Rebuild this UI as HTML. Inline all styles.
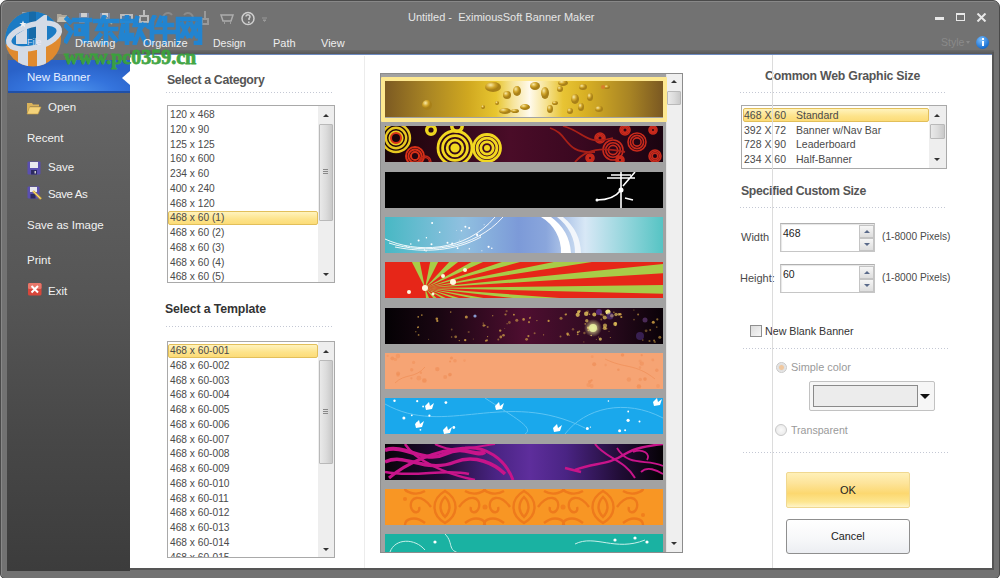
<!DOCTYPE html>
<html><head><meta charset="utf-8">
<style>
*{margin:0;padding:0;box-sizing:border-box}
html,body{width:1000px;height:578px;overflow:hidden;background:#fff}
body{font-family:"Liberation Sans",sans-serif;font-size:11px;color:#333;position:relative}
.a{position:absolute}
#win{left:0;top:0;width:1000px;height:579px;background:#727272;border:1px solid #4a4a4a;border-radius:7px 7px 5px 5px;box-shadow:inset 1px 1px 0 #888}
.t{position:absolute;white-space:nowrap;line-height:1}
#side{left:7px;top:54px;width:123px;height:517px;background:linear-gradient(#6a6a6a,#5e5e5e 25%,#555 48%,#474747 75%,#3c3c3c)}
#content{left:130px;top:54px;width:862px;height:514px;background:#fff;border-top:1px solid #6d8ac0}
#cframe{left:130px;top:52px;width:864px;height:518px;border:2px solid #555;border-left:none;border-top:none}
.st{color:#f2f2f2;font-size:11.5px}
.tab{color:#eee;font-size:11px;top:38px;z-index:5}
.dot{position:absolute;height:1px;background-image:linear-gradient(90deg,#c4c8d4 1px,transparent 1px);background-size:3px 1px}
.h{font-weight:bold;color:#555;font-size:12.3px;letter-spacing:-0.3px}
.lb{position:absolute;background:#fff;border:1px solid #a9a9a9}
.li{position:absolute;font-size:10.2px;color:#4a4a4a;white-space:nowrap;line-height:1}
.sel{position:absolute;border:1px solid #e2bf5a;border-radius:2px;background:linear-gradient(#fff3bd,#fde38a 60%,#fcdc78)}
.sb{position:absolute;background:#eeeeee}
.thumb{position:absolute;background:linear-gradient(90deg,#e9e9e9,#dcdcdc 50%,#c9c9c9);border:1px solid #b9b9b9;border-radius:1px}
.up{position:absolute;width:0;height:0;border-left:3px solid transparent;border-right:3px solid transparent;border-bottom:3px solid #333}
.dn{position:absolute;width:0;height:0;border-left:3px solid transparent;border-right:3px solid transparent;border-top:3px solid #333}
.lt{color:#4a4a4a;font-size:10.7px}
.bn{position:absolute;left:385px;width:278px;height:36px;overflow:hidden}
</style></head><body>
<div id="win" class="a"></div>
<!-- title -->
<div class="t" style="left:408px;top:12px;color:#e6e6e6;font-size:11px">Untitled -&nbsp; EximiousSoft Banner Maker</div>
<div class="t tab" style="left:75px">Drawing</div>
<div class="t tab" style="left:143px">Organize</div>
<div class="t tab" style="left:213px;font-size:10.5px">Design</div>
<div class="t tab" style="left:273px">Path</div>
<div class="t tab" style="left:321px">View</div>
<!-- window controls -->
<div class="a" style="left:935px;top:17px;width:9px;height:3px;background:#e8e8e8"></div>
<div class="a" style="left:956px;top:13px;width:9px;height:8px;border:1px solid #e8e8e8;border-top-width:2px"></div>
<svg class="a" style="left:976px;top:13px" width="11" height="9"><path d="M1.5 0.5 L9.5 8.5 M9.5 0.5 L1.5 8.5" stroke="#e8e8e8" stroke-width="2"/></svg>
<div class="t" style="left:941px;top:37px;color:#8a8a8a;font-size:10.5px">Style</div>
<div class="a" style="left:966px;top:41px;width:0;height:0;border-left:2.5px solid transparent;border-right:2.5px solid transparent;border-top:3px solid #8a8a8a"></div>
<div class="a" style="left:976px;top:36px;width:13px;height:13px;border-radius:50%;background:radial-gradient(circle at 40% 30%,#7cc0ff,#1a6fd0 70%,#0d4fa0)"></div>
<div class="a" style="left:981.5px;top:38px;width:2px;height:2px;background:#fff"></div>
<div class="a" style="left:981.5px;top:41px;width:2px;height:5px;background:#fff"></div>

<div class="a" style="left:130px;top:50px;width:864px;height:4px;background:linear-gradient(#6a6a6a,#585858)"></div>
<div id="cframe" class="a"></div>
<div id="side" class="a"></div>
<div id="content" class="a"></div>

<!-- sidebar -->
<div class="a" style="left:8px;top:60px;width:122px;height:33px;background:radial-gradient(ellipse 70% 90% at 50% 100%,#4e94ec,#3473dc 55%,#2a62c8);box-shadow:inset 0 -2px 0 #2050a8"></div>
<div class="a" style="left:122px;top:71px;width:0;height:0;border-top:7px solid transparent;border-bottom:7px solid transparent;border-right:8px solid #fff"></div>
<div class="t st" style="left:27px;top:72px;color:#e8f0ff">New Banner</div>
<div class="t st" style="left:48px;top:102px">Open</div>
<div class="t st" style="left:27px;top:133px">Recent</div>
<div class="t st" style="left:48px;top:162px">Save</div>
<div class="t st" style="left:48px;top:189px;letter-spacing:-0.4px">Save As</div>
<div class="t st" style="left:27px;top:220px">Save as Image</div>
<div class="t st" style="left:27px;top:255px">Print</div>
<div class="t st" style="left:48px;top:286px">Exit</div>
<!-- icons -->
<svg class="a" style="left:26px;top:101px" width="16" height="14"><path d="M1 2h5l1 1.5h6v2H4L1 12z" fill="#d9b25a"/><path d="M3.5 6h11.5l-3 7H1z" fill="#f3d27a" stroke="#c9a040" stroke-width="0.6"/></svg>
<svg class="a" style="left:27px;top:161px" width="14" height="14"><rect x="0.5" y="0.5" width="13" height="13" rx="1" fill="#5a4fb0"/><rect x="3" y="1" width="8" height="6" fill="#e8e8f0"/><rect x="4" y="9" width="6" height="4.5" fill="#2c2a60"/><rect x="7.5" y="10" width="1.5" height="2.5" fill="#ccc"/></svg>
<svg class="a" style="left:27px;top:186px" width="16" height="16"><rect x="0.5" y="0.5" width="12" height="12" rx="1" fill="#5a4fb0"/><rect x="3" y="1" width="7" height="5" fill="#e8e8f0"/><rect x="3.5" y="8" width="5" height="4.5" fill="#2c2a60"/><path d="M6 5 L14 13" stroke="#d8b040" stroke-width="2.4"/><path d="M6 5 L13.5 12.5" stroke="#f5e08a" stroke-width="0.8"/></svg>
<svg class="a" style="left:28px;top:283px" width="14" height="13"><rect x="0" y="0" width="13.5" height="12.5" rx="1.5" fill="#d8463a"/><rect x="0" y="0" width="13.5" height="6" rx="1.5" fill="#e8776a"/><path d="M3.5 3 L10 9.5 M10 3 L3.5 9.5" stroke="#fff" stroke-width="2"/></svg>

<!-- category -->
<div class="t h" style="left:167px;top:74px;letter-spacing:-0.34px">Select a Category</div>
<div class="dot" style="left:166px;top:92px;width:168px"></div>
<div class="lb" style="left:167px;top:105px;width:168px;height:178px;overflow:hidden">
<div class="sel" style="left:0px;top:105px;width:150px;height:14px"></div>
<div class="li" style="left:2px;top:4.00px">120 x 468</div>
<div class="li" style="left:2px;top:18.75px">120 x 90</div>
<div class="li" style="left:2px;top:33.50px">125 x 125</div>
<div class="li" style="left:2px;top:48.25px">160 x 600</div>
<div class="li" style="left:2px;top:63.00px">234 x 60</div>
<div class="li" style="left:2px;top:77.75px">400 x 240</div>
<div class="li" style="left:2px;top:92.50px">468 x 120</div>
<div class="li" style="left:2px;top:107.25px">468 x 60 (1)</div>
<div class="li" style="left:2px;top:122.00px">468 x 60 (2)</div>
<div class="li" style="left:2px;top:136.75px">468 x 60 (3)</div>
<div class="li" style="left:2px;top:151.50px">468 x 60 (4)</div>
<div class="li" style="left:2px;top:166.25px">468 x 60 (5)</div>
<div class="sb" style="left:150px;top:0;width:16px;height:176px"></div>
<div class="up" style="left:155px;top:8px"></div>
<div class="thumb" style="left:151px;top:18px;width:14px;height:97px"></div>
<div class="a" style="left:155px;top:63px;width:5px;height:5px;border-top:1px solid #888;border-bottom:1px solid #888"></div><div class="a" style="left:155px;top:65px;width:5px;height:1px;background:#888"></div>
<div class="dn" style="left:155px;top:167px"></div>
</div>
<!-- template -->
<div class="t h" style="left:165px;top:303px;color:#333;letter-spacing:-0.12px">Select a Template</div>
<div class="dot" style="left:166px;top:326px;width:168px"></div>
<div class="lb" style="left:167px;top:341px;width:168px;height:217px;overflow:hidden">
<div class="sel" style="left:0px;top:2px;width:150px;height:14px"></div>
<div class="li" style="left:2px;top:4.00px">468 x 60-001</div>
<div class="li" style="left:2px;top:18.75px">468 x 60-002</div>
<div class="li" style="left:2px;top:33.50px">468 x 60-003</div>
<div class="li" style="left:2px;top:48.25px">468 x 60-004</div>
<div class="li" style="left:2px;top:63.00px">468 x 60-005</div>
<div class="li" style="left:2px;top:77.75px">468 x 60-006</div>
<div class="li" style="left:2px;top:92.50px">468 x 60-007</div>
<div class="li" style="left:2px;top:107.25px">468 x 60-008</div>
<div class="li" style="left:2px;top:122.00px">468 x 60-009</div>
<div class="li" style="left:2px;top:136.75px">468 x 60-010</div>
<div class="li" style="left:2px;top:151.50px">468 x 60-011</div>
<div class="li" style="left:2px;top:166.25px">468 x 60-012</div>
<div class="li" style="left:2px;top:181.00px">468 x 60-013</div>
<div class="li" style="left:2px;top:195.75px">468 x 60-014</div>
<div class="li" style="left:2px;top:210.50px">468 x 60-015</div>
<div class="sb" style="left:150px;top:0;width:16px;height:215px"></div>
<div class="up" style="left:155px;top:8px"></div>
<div class="thumb" style="left:151px;top:18px;width:14px;height:104px"></div>
<div class="a" style="left:155px;top:67px;width:5px;height:5px;border-top:1px solid #888;border-bottom:1px solid #888"></div><div class="a" style="left:155px;top:69px;width:5px;height:1px;background:#888"></div>
<div class="dn" style="left:155px;top:206px"></div>
</div>
<!-- gallery -->
<div class="a" style="left:380px;top:73px;width:303px;height:480px;border:1px solid #8c8c8c;background:#a2a2a2;overflow:hidden">
</div>
<div class="a" style="left:666px;top:74px;width:16px;height:478px;background:#efefef;border-left:1px solid #e4e4e4"></div>
<div class="up" style="left:671px;top:80px"></div>
<div class="thumb" style="left:667px;top:91px;width:14px;height:14px"></div>
<div class="dn" style="left:671px;top:542px"></div>
<div class="a" style="left:381px;top:77px;width:286px;height:45px;border:4px solid #fde890;border-radius:1px"></div>
<div class="bn" style="top:81px;height:36px"><svg width="278" height="36" viewBox="0 0 278 36"><defs><linearGradient id="g1" x1="0" x2="1"><stop offset="0" stop-color="#7c5a22"/><stop offset="0.15" stop-color="#a88424"/><stop offset="0.3" stop-color="#d0a820"/><stop offset="0.4" stop-color="#e8c630"/><stop offset="0.46" stop-color="#f6e49a"/><stop offset="0.52" stop-color="#fffaec"/><stop offset="0.58" stop-color="#f6e290"/><stop offset="0.64" stop-color="#e8c434"/><stop offset="0.72" stop-color="#d8b024"/><stop offset="0.88" stop-color="#a88424"/><stop offset="1" stop-color="#7a5822"/></linearGradient><radialGradient id="gb" cx="0.35" cy="0.3"><stop offset="0" stop-color="#f8eaa8"/><stop offset="0.6" stop-color="#d0a428"/><stop offset="1" stop-color="#a88018"/></radialGradient></defs><rect width="278" height="36" fill="url(#g1)"/><ellipse cx="42" cy="24" rx="5" ry="5" fill="url(#gb)"/><ellipse cx="108" cy="6" rx="8" ry="5" fill="url(#gb)"/><ellipse cx="122" cy="14" rx="4" ry="4" fill="url(#gb)"/><ellipse cx="132" cy="10" rx="4" ry="5" fill="url(#gb)"/><ellipse cx="150" cy="5" rx="5" ry="4" fill="url(#gb)"/><ellipse cx="160" cy="12" rx="4" ry="6" fill="url(#gb)"/><ellipse cx="165" cy="28" rx="3" ry="4" fill="url(#gb)"/><ellipse cx="170" cy="22" rx="3" ry="2" fill="url(#gb)"/><ellipse cx="178" cy="2" rx="5" ry="3" fill="url(#gb)"/><ellipse cx="190" cy="18" rx="4" ry="5" fill="url(#gb)"/><ellipse cx="198" cy="6" rx="4" ry="3" fill="url(#gb)"/><ellipse cx="205" cy="16" rx="3" ry="4" fill="url(#gb)"/><ellipse cx="214" cy="28" rx="4" ry="3" fill="url(#gb)"/><ellipse cx="140" cy="26" rx="5" ry="3" fill="url(#gb)"/><ellipse cx="130" cy="30" rx="4" ry="2" fill="url(#gb)"/><ellipse cx="185" cy="30" rx="3" ry="3" fill="url(#gb)"/><ellipse cx="175" cy="8" rx="3" ry="3" fill="url(#gb)"/><ellipse cx="112" cy="22" rx="2" ry="2" fill="url(#gb)"/><ellipse cx="222" cy="6" rx="3" ry="2" fill="url(#gb)"/><ellipse cx="120" cy="30" rx="6" ry="3" fill="url(#gb)"/><ellipse cx="98" cy="26" rx="2" ry="2" fill="url(#gb)"/><ellipse cx="196" cy="26" rx="3" ry="4" fill="url(#gb)"/><circle cx="218" cy="6" r="2" fill="#e07030" opacity="0.7"/></svg></div>
<div class="bn" style="top:126px;height:36px"><svg width="278" height="36" viewBox="0 0 278 36"><defs><linearGradient id="g2" x1="0" x2="1"><stop offset="0" stop-color="#180408"/><stop offset="0.45" stop-color="#4a0c28"/><stop offset="0.7" stop-color="#3a0820"/><stop offset="1" stop-color="#1a0410"/></linearGradient></defs><rect width="278" height="36" fill="url(#g2)"/><circle cx="30" cy="30" r="9.0" fill="none" stroke="#d83018" stroke-width="2.0"/><circle cx="30" cy="30" r="6.6" fill="none" stroke="#d83018" stroke-width="2.0"/><circle cx="30" cy="30" r="4.1" fill="none" stroke="#d83018" stroke-width="2.0"/><circle cx="11" cy="12" r="14.0" fill="none" stroke="#e8c820" stroke-width="2.4"/><circle cx="11" cy="12" r="10.2" fill="none" stroke="#e8c820" stroke-width="2.4"/><circle cx="11" cy="12" r="6.4" fill="none" stroke="#e8c820" stroke-width="2.4"/><circle cx="11" cy="12" r="5" fill="none" stroke="#d83018" stroke-width="2"/><circle cx="46" cy="4" r="5.0" fill="none" stroke="#f0d820" stroke-width="2.0"/><circle cx="46" cy="4" r="3.6" fill="none" stroke="#f0d820" stroke-width="2.0"/><circle cx="72" cy="0" r="6.0" fill="none" stroke="#f0d820" stroke-width="2.0"/><circle cx="72" cy="0" r="4.4" fill="none" stroke="#f0d820" stroke-width="2.0"/><circle cx="70" cy="22" r="17.0" fill="none" stroke="#f2d820" stroke-width="2.8"/><circle cx="70" cy="22" r="12.4" fill="none" stroke="#f2d820" stroke-width="2.8"/><circle cx="70" cy="22" r="7.8" fill="none" stroke="#f2d820" stroke-width="2.8"/><circle cx="70" cy="22" r="3.2" fill="none" stroke="#f2d820" stroke-width="2.8"/><circle cx="70" cy="22" r="2.5" fill="#f2d820"/><circle cx="102" cy="22" r="13.5" fill="none" stroke="#f2d820" stroke-width="2.8"/><circle cx="102" cy="22" r="9.9" fill="none" stroke="#f2d820" stroke-width="2.8"/><circle cx="102" cy="22" r="6.2" fill="none" stroke="#f2d820" stroke-width="2.8"/><circle cx="102" cy="22" r="3" fill="#f2d820"/><circle cx="40" cy="36" r="6.0" fill="none" stroke="#c02818" stroke-width="1.5"/><circle cx="40" cy="36" r="4.4" fill="none" stroke="#c02818" stroke-width="1.5"/><circle cx="228" cy="24" r="10.0" fill="none" stroke="#c82a1c" stroke-width="1.6"/><circle cx="228" cy="24" r="7.3" fill="none" stroke="#c82a1c" stroke-width="1.6"/><circle cx="228" cy="24" r="4.6" fill="none" stroke="#c82a1c" stroke-width="1.6"/><circle cx="252" cy="16" r="9.0" fill="none" stroke="#c82a1c" stroke-width="1.6"/><circle cx="252" cy="16" r="6.6" fill="none" stroke="#c82a1c" stroke-width="1.6"/><circle cx="252" cy="16" r="4.1" fill="none" stroke="#c82a1c" stroke-width="1.6"/><circle cx="270" cy="30" r="6.0" fill="none" stroke="#c82a1c" stroke-width="1.6"/><circle cx="270" cy="30" r="4.4" fill="none" stroke="#c82a1c" stroke-width="1.6"/><circle cx="270" cy="30" r="2.8" fill="none" stroke="#c82a1c" stroke-width="1.6"/><circle cx="240" cy="4" r="5.0" fill="none" stroke="#c82a1c" stroke-width="1.6"/><circle cx="240" cy="4" r="3.6" fill="none" stroke="#c82a1c" stroke-width="1.6"/><circle cx="240" cy="4" r="2.3" fill="none" stroke="#c82a1c" stroke-width="1.6"/><circle cx="215" cy="12" r="5.0" fill="none" stroke="#c82a1c" stroke-width="1.6"/><circle cx="215" cy="12" r="3.6" fill="none" stroke="#c82a1c" stroke-width="1.6"/><circle cx="215" cy="12" r="2.3" fill="none" stroke="#c82a1c" stroke-width="1.6"/><circle cx="268" cy="4" r="4.0" fill="none" stroke="#c82a1c" stroke-width="1.6"/><circle cx="268" cy="4" r="2.9" fill="none" stroke="#c82a1c" stroke-width="1.6"/><circle cx="268" cy="4" r="1.8" fill="none" stroke="#c82a1c" stroke-width="1.6"/><circle cx="205" cy="32" r="4.0" fill="none" stroke="#c82a1c" stroke-width="1.6"/><circle cx="205" cy="32" r="2.9" fill="none" stroke="#c82a1c" stroke-width="1.6"/><circle cx="205" cy="32" r="1.8" fill="none" stroke="#c82a1c" stroke-width="1.6"/><circle cx="235" cy="34" r="4.0" fill="none" stroke="#c82a1c" stroke-width="1.6"/><circle cx="235" cy="34" r="2.9" fill="none" stroke="#c82a1c" stroke-width="1.6"/><circle cx="235" cy="34" r="1.8" fill="none" stroke="#c82a1c" stroke-width="1.6"/><path d="M165 2 C185 8,178 28,210 26 M178 0 C200 6,200 20,228 12 M190 36 C200 24,215 20,240 26" stroke="#a82018" stroke-width="1.8" fill="none"/></svg></div>
<div class="bn" style="top:172px;height:36px"><svg width="278" height="36" viewBox="0 0 278 36"><defs></defs><rect width="278" height="36" fill="#020202"/><path d="M236 0 L236 36 M222 6 L250 6 M226 3 L246 3 M236 18 C230 26,222 28,212 28 M240 26 L248 28 M250 0 L238 14" stroke="#fff" stroke-width="1.6" fill="none"/><circle cx="236" cy="18" r="2.5" fill="#fff"/><circle cx="212" cy="28" r="1.5" fill="#fff"/></svg></div>
<div class="bn" style="top:217px;height:36px"><svg width="278" height="36" viewBox="0 0 278 36"><defs><radialGradient id="g4" cx="0.5" cy="0.5" r="0.5" fx="0.5" fy="0.5" gradientTransform="translate(0 0) scale(1 1)"><stop offset="0" stop-color="#7f98da"/><stop offset="1" stop-color="#a8c8e8"/></radialGradient><linearGradient id="g4b" x1="0" x2="1"><stop offset="0" stop-color="#48b8c4"/><stop offset="0.28" stop-color="#90c0e0"/><stop offset="0.48" stop-color="#7c9ad8"/><stop offset="0.58" stop-color="#8aa6dc"/><stop offset="0.72" stop-color="#d8e8f6"/><stop offset="1" stop-color="#56c4c4"/></linearGradient></defs><rect width="278" height="36" fill="url(#g4b)"/><path d="M156 0 A40 40 0 0 1 176 36 L186 36 A48 48 0 0 0 166 0 Z" fill="#fff"/><path d="M172 0 A44 44 0 0 1 190 36 L196 36 A48 48 0 0 0 178 0 Z" fill="#f2f6fb"/><path d="M0 22 C30 36,80 36,110 0 M4 26 C40 38,90 32,118 0 M10 30 C40 36,70 34,96 20" stroke="#fff" stroke-width="1" fill="none" opacity="0.9"/><circle cx="41.4" cy="20.8" r="0.7" fill="#fff"/><circle cx="74.4" cy="23.1" r="0.4" fill="#fff"/><circle cx="21.2" cy="29.3" r="0.6" fill="#fff"/><circle cx="41.1" cy="33.9" r="0.7" fill="#fff"/><circle cx="95.3" cy="18.8" r="0.8" fill="#fff"/><circle cx="33.6" cy="23.4" r="1.0" fill="#fff"/><circle cx="67.1" cy="26.5" r="0.9" fill="#fff"/><circle cx="25.8" cy="27.0" r="0.8" fill="#fff"/><circle cx="47.1" cy="5.9" r="1.0" fill="#fff"/><circle cx="62.5" cy="25.8" r="1.0" fill="#fff"/><circle cx="84.3" cy="31.7" r="0.7" fill="#fff"/><circle cx="92.1" cy="17.9" r="1.1" fill="#fff"/><circle cx="99.1" cy="7.8" r="0.5" fill="#fff"/><circle cx="39.5" cy="33.0" r="0.7" fill="#fff"/><circle cx="76.4" cy="13.7" r="0.8" fill="#fff"/><circle cx="54.7" cy="15.2" r="0.8" fill="#fff"/><circle cx="72.6" cy="31.2" r="0.9" fill="#fff"/><circle cx="103.6" cy="29.8" r="1.1" fill="#fff"/><circle cx="80.4" cy="9.7" r="1.0" fill="#fff"/><circle cx="106.8" cy="31.2" r="0.8" fill="#fff"/><circle cx="84.2" cy="11.1" r="1.0" fill="#fff"/><circle cx="71.6" cy="13.3" r="0.4" fill="#fff"/><circle cx="96.9" cy="33.7" r="0.5" fill="#fff"/><circle cx="92.1" cy="16.9" r="0.5" fill="#fff"/><circle cx="46.5" cy="27.3" r="1.0" fill="#fff"/></svg></div>
<div class="bn" style="top:262px;height:36px"><svg width="278" height="36" viewBox="0 0 278 36"><defs></defs><rect width="278" height="36" fill="#e62618"/><path d="M40 26 L-29.5 -111.9 L12.1 -113.7 Z" fill="#a8cc48"/><path d="M40 26 L67.9 -113.7 L109.5 -111.9 Z" fill="#a8cc48"/><path d="M40 26 L163.6 -107.1 L202.7 -101.9 Z" fill="#a8cc48"/><path d="M40 26 L252.0 -92.7 L286.3 -84.3 Z" fill="#a8cc48"/><path d="M40 26 L327.7 -71.3 L355.2 -60.2 Z" fill="#a8cc48"/><path d="M40 26 L386.4 -44.0 L405.4 -30.9 Z" fill="#a8cc48"/><path d="M40 26 L424.5 -12.6 L433.9 1.7 Z" fill="#a8cc48"/><path d="M40 26 L439.8 21.1 L439.0 35.8 Z" fill="#a8cc48"/><path d="M40 26 L431.3 55.1 L420.4 69.3 Z" fill="#a8cc48"/><path d="M40 26 L399.5 87.4 L379.2 100.2 Z" fill="#a8cc48"/><path d="M40 26 L346.4 116.0 L317.9 126.7 Z" fill="#a8cc48"/><path d="M40 26 L275.1 139.3 L240.0 147.2 Z" fill="#a8cc48"/><path d="M40 26 L189.8 155.8 L150.3 160.6 Z" fill="#a8cc48"/><path d="M40 26 L95.7 164.6 L54.0 165.9 Z" fill="#a8cc48"/><circle cx="40" cy="26" r="3" fill="#fff8e0"/><circle cx="68" cy="20" r="3" fill="#fff8e0"/><circle cx="58" cy="14" r="2" fill="#fff8e0"/><circle cx="24" cy="30" r="2" fill="#fff8e0"/><circle cx="48" cy="32" r="1.5" fill="#fff8e0"/><circle cx="80" cy="8" r="2" fill="#fff8e0"/></svg></div>
<div class="bn" style="top:308px;height:36px"><svg width="278" height="36" viewBox="0 0 278 36"><defs><linearGradient id="g6" x1="0" x2="1"><stop offset="0" stop-color="#040104"/><stop offset="0.2" stop-color="#1a0612"/><stop offset="0.5" stop-color="#4e0e30"/><stop offset="0.8" stop-color="#2a0a1e"/><stop offset="1" stop-color="#0a0208"/></linearGradient><radialGradient id="gl"><stop offset="0" stop-color="#f4f0a0"/><stop offset="1" stop-color="#f4f0a0" stop-opacity="0"/></radialGradient></defs><rect width="278" height="36" fill="url(#g6)"/><circle cx="182.6" cy="25.7" r="1.3" fill="#d8a848" opacity="0.82"/><circle cx="211.3" cy="31.5" r="0.5" fill="#d8a848" opacity="0.58"/><circle cx="261.1" cy="22.8" r="1.4" fill="#d8a848" opacity="0.41"/><circle cx="144.9" cy="9.9" r="1.0" fill="#d8a848" opacity="0.64"/><circle cx="33.2" cy="8.9" r="0.8" fill="#d8a848" opacity="0.81"/><circle cx="217.6" cy="7.1" r="1.3" fill="#d8a848" opacity="0.42"/><circle cx="181.3" cy="6.1" r="0.5" fill="#d8a848" opacity="0.79"/><circle cx="81.3" cy="8.9" r="1.5" fill="#d8a848" opacity="0.79"/><circle cx="100.9" cy="32.8" r="1.0" fill="#d8a848" opacity="0.69"/><circle cx="80.2" cy="32.1" r="1.2" fill="#d8a848" opacity="0.83"/><circle cx="249.0" cy="11.6" r="0.9" fill="#d8a848" opacity="0.43"/><circle cx="65.7" cy="4.1" r="0.8" fill="#d8a848" opacity="0.65"/><circle cx="30.8" cy="23.7" r="0.8" fill="#d8a848" opacity="0.50"/><circle cx="230.5" cy="17.4" r="0.8" fill="#d8a848" opacity="0.59"/><circle cx="202.6" cy="3.8" r="1.5" fill="#d8a848" opacity="0.36"/><circle cx="213.7" cy="29.0" r="0.5" fill="#d8a848" opacity="0.74"/><circle cx="119.7" cy="20.5" r="0.5" fill="#d8a848" opacity="0.37"/><circle cx="74.3" cy="32.6" r="0.7" fill="#d8a848" opacity="0.73"/><circle cx="257.8" cy="32.1" r="0.8" fill="#d8a848" opacity="0.53"/><circle cx="158.6" cy="26.8" r="0.6" fill="#d8a848" opacity="0.72"/><circle cx="225.3" cy="29.5" r="0.5" fill="#d8a848" opacity="0.82"/><circle cx="52.3" cy="12.9" r="1.1" fill="#d8a848" opacity="0.81"/><circle cx="113.3" cy="31.6" r="1.0" fill="#d8a848" opacity="0.51"/><circle cx="107.6" cy="7.7" r="0.6" fill="#d8a848" opacity="0.42"/><circle cx="198.8" cy="33.9" r="0.7" fill="#d8a848" opacity="0.37"/><circle cx="271.7" cy="19.1" r="0.9" fill="#d8a848" opacity="0.47"/><circle cx="175.5" cy="28.4" r="1.0" fill="#d8a848" opacity="0.56"/><circle cx="43.6" cy="31.3" r="0.5" fill="#d8a848" opacity="0.60"/><circle cx="235.4" cy="6.2" r="1.2" fill="#d8a848" opacity="0.82"/><circle cx="184.4" cy="27.2" r="0.6" fill="#d8a848" opacity="0.57"/><circle cx="66.6" cy="29.0" r="0.8" fill="#d8a848" opacity="0.58"/><circle cx="274.8" cy="29.3" r="1.5" fill="#d8a848" opacity="0.58"/><circle cx="149.6" cy="25.3" r="1.0" fill="#d8a848" opacity="0.50"/><circle cx="128.9" cy="6.7" r="0.9" fill="#d8a848" opacity="0.84"/><circle cx="265.2" cy="22.1" r="1.0" fill="#d8a848" opacity="0.52"/><circle cx="51.8" cy="10.7" r="1.3" fill="#d8a848" opacity="0.78"/><circle cx="118.5" cy="27.2" r="1.3" fill="#d8a848" opacity="0.70"/><circle cx="192.7" cy="26.3" r="0.9" fill="#d8a848" opacity="0.70"/><circle cx="98.8" cy="17.5" r="1.3" fill="#d8a848" opacity="0.70"/><circle cx="102.0" cy="32.3" r="1.1" fill="#d8a848" opacity="0.64"/><circle cx="32.8" cy="19.5" r="0.8" fill="#d8a848" opacity="0.69"/><circle cx="143.4" cy="28.1" r="1.1" fill="#d8a848" opacity="0.75"/><circle cx="115.2" cy="22.6" r="1.2" fill="#d8a848" opacity="0.76"/><circle cx="115.8" cy="29.0" r="1.4" fill="#d8a848" opacity="0.69"/><circle cx="269.1" cy="32.6" r="1.0" fill="#d8a848" opacity="0.61"/><circle cx="70.7" cy="28.8" r="1.4" fill="#d8a848" opacity="0.59"/><circle cx="199.4" cy="25.0" r="1.2" fill="#d8a848" opacity="0.44"/><circle cx="221.2" cy="20.6" r="1.2" fill="#d8a848" opacity="0.56"/><circle cx="182.8" cy="26.8" r="1.1" fill="#d8a848" opacity="0.71"/><circle cx="36.8" cy="7.1" r="0.9" fill="#d8a848" opacity="0.68"/><circle cx="83.7" cy="24.0" r="1.1" fill="#d8a848" opacity="0.37"/><circle cx="145.5" cy="9.2" r="0.6" fill="#d8a848" opacity="0.42"/><circle cx="107.8" cy="7.8" r="0.7" fill="#d8a848" opacity="0.37"/><circle cx="144.0" cy="14.2" r="1.1" fill="#d8a848" opacity="0.65"/><circle cx="88.3" cy="30.9" r="0.5" fill="#d8a848" opacity="0.55"/><circle cx="98.2" cy="15.1" r="0.6" fill="#d8a848" opacity="0.77"/><circle cx="121.6" cy="3.2" r="1.1" fill="#d8a848" opacity="0.40"/><circle cx="163.6" cy="12.9" r="1.1" fill="#d8a848" opacity="0.83"/><circle cx="230.5" cy="15.4" r="1.3" fill="#d8a848" opacity="0.67"/><circle cx="120.5" cy="6.5" r="1.1" fill="#d8a848" opacity="0.63"/><circle cx="264.5" cy="33.0" r="1.1" fill="#d8a848" opacity="0.53"/><circle cx="248.9" cy="2.0" r="0.6" fill="#d8a848" opacity="0.63"/><circle cx="180.7" cy="6.5" r="1.1" fill="#d8a848" opacity="0.80"/><circle cx="122.1" cy="15.8" r="0.7" fill="#d8a848" opacity="0.50"/><circle cx="268.3" cy="14.2" r="1.5" fill="#d8a848" opacity="0.81"/><circle cx="176.0" cy="10.3" r="1.5" fill="#d8a848" opacity="0.60"/><circle cx="131.8" cy="12.2" r="1.5" fill="#d8a848" opacity="0.60"/><circle cx="100.2" cy="17.3" r="0.6" fill="#d8a848" opacity="0.66"/><circle cx="138.6" cy="11.4" r="1.3" fill="#d8a848" opacity="0.76"/><circle cx="33.2" cy="19.0" r="0.8" fill="#d8a848" opacity="0.82"/><circle cx="221.6" cy="9.9" r="0.8" fill="#d8a848" opacity="0.43"/><circle cx="272.3" cy="11.4" r="1.1" fill="#d8a848" opacity="0.59"/><circle cx="188.0" cy="21.3" r="1.2" fill="#d8a848" opacity="0.41"/><circle cx="216.3" cy="11.6" r="1.0" fill="#d8a848" opacity="0.52"/><circle cx="102.7" cy="19.0" r="1.0" fill="#d8a848" opacity="0.53"/><circle cx="212.5" cy="20.9" r="0.5" fill="#d8a848" opacity="0.48"/><circle cx="141.6" cy="31.3" r="1.4" fill="#d8a848" opacity="0.62"/><circle cx="33.6" cy="26.9" r="0.9" fill="#d8a848" opacity="0.64"/><circle cx="203.5" cy="22.2" r="1.0" fill="#d8a848" opacity="0.81"/><circle cx="124.4" cy="14.5" r="1.4" fill="#d8a848" opacity="0.45"/><circle cx="102.6" cy="28.6" r="0.6" fill="#d8a848" opacity="0.77"/><circle cx="200.2" cy="15.9" r="0.8" fill="#d8a848" opacity="0.74"/><circle cx="253.1" cy="6.6" r="1.0" fill="#d8a848" opacity="0.62"/><circle cx="151.9" cy="12.6" r="0.7" fill="#d8a848" opacity="0.64"/><circle cx="228.9" cy="4.2" r="0.7" fill="#d8a848" opacity="0.76"/><circle cx="224.0" cy="23.2" r="0.5" fill="#d8a848" opacity="0.71"/><circle cx="269.8" cy="33.9" r="1.2" fill="#d8a848" opacity="0.37"/><circle cx="236.3" cy="9.0" r="1.1" fill="#d8a848" opacity="0.83"/><circle cx="204.5" cy="6.3" r="0.8" fill="#d8a848" opacity="0.81"/><circle cx="66.7" cy="21.5" r="0.9" fill="#d8a848" opacity="0.43"/><circle cx="221.1" cy="3.4" r="1.0" fill="#f0d060" opacity="0.65"/><circle cx="193.6" cy="3.8" r="1.6" fill="#f0d060" opacity="0.80"/><circle cx="233.9" cy="6.3" r="1.4" fill="#f0d060" opacity="0.63"/><circle cx="220.0" cy="17.7" r="2.1" fill="#f0d060" opacity="0.65"/><circle cx="192.8" cy="24.3" r="1.0" fill="#f0d060" opacity="0.75"/><circle cx="215.3" cy="31.1" r="1.6" fill="#f0d060" opacity="0.75"/><circle cx="203.2" cy="19.7" r="1.2" fill="#f0d060" opacity="0.80"/><circle cx="215.8" cy="6.3" r="1.1" fill="#f0d060" opacity="0.65"/><circle cx="226.8" cy="7.7" r="1.8" fill="#f0d060" opacity="0.76"/><circle cx="194.3" cy="23.4" r="0.9" fill="#f0d060" opacity="0.55"/><circle cx="219.7" cy="9.6" r="2.0" fill="#f0d060" opacity="0.69"/><circle cx="206.2" cy="27.5" r="0.8" fill="#f0d060" opacity="0.79"/><circle cx="192.7" cy="6.8" r="2.1" fill="#f0d060" opacity="0.77"/><circle cx="201.2" cy="5.7" r="2.2" fill="#f0d060" opacity="0.77"/><circle cx="231.0" cy="6.5" r="1.7" fill="#f0d060" opacity="0.64"/><circle cx="201.8" cy="12.7" r="1.7" fill="#f0d060" opacity="0.64"/><circle cx="209.3" cy="6.4" r="2.0" fill="#f0d060" opacity="0.76"/><circle cx="230.2" cy="15.9" r="2.0" fill="#f0d060" opacity="0.71"/><circle cx="219.6" cy="20.3" r="1.8" fill="#f0d060" opacity="0.66"/><circle cx="194.8" cy="3.1" r="1.1" fill="#f0d060" opacity="0.52"/><circle cx="208" cy="20" r="9" fill="url(#gl)"/><circle cx="208" cy="20" r="4" fill="#e8f0a0" opacity="0.9"/><circle cx="223" cy="4" r="2.5" fill="#f0e080"/><circle cx="214" cy="4" r="3" fill="#7040b0" opacity="0.6"/><circle cx="225" cy="8" r="3.5" fill="#6040a0" opacity="0.5"/><circle cx="255" cy="28" r="4" fill="#6040a0" opacity="0.45"/><circle cx="260" cy="12" r="2.5" fill="#8050a0" opacity="0.5"/><circle cx="90" cy="8" r="1.6" fill="#a0c0ff" opacity="0.8"/></svg></div>
<div class="bn" style="top:353px;height:36px"><svg width="278" height="36" viewBox="0 0 278 36"><rect width="278" height="36" fill="#f6a474"/><circle cx="237.5" cy="2.0" r="1.7" fill="#ee8a52" opacity="0.66"/><circle cx="233.4" cy="16.8" r="1.3" fill="#ee8a52" opacity="0.56"/><circle cx="267.8" cy="6.9" r="1.4" fill="#ee8a52" opacity="0.41"/><circle cx="12.9" cy="3.1" r="2.3" fill="#ee8a52" opacity="0.44"/><circle cx="60.2" cy="24.0" r="2.0" fill="#ee8a52" opacity="0.49"/><circle cx="209.2" cy="11.3" r="2.0" fill="#ee8a52" opacity="0.59"/><circle cx="13.1" cy="20.4" r="2.0" fill="#ee8a52" opacity="0.55"/><circle cx="255.1" cy="7.9" r="1.5" fill="#ee8a52" opacity="0.33"/><circle cx="79.5" cy="7.6" r="1.3" fill="#ee8a52" opacity="0.32"/><circle cx="256.7" cy="2.2" r="1.1" fill="#ee8a52" opacity="0.61"/><circle cx="203.5" cy="32.1" r="2.1" fill="#ee8a52" opacity="0.39"/><circle cx="207.2" cy="3.7" r="1.4" fill="#ee8a52" opacity="0.32"/><circle cx="204.7" cy="28.7" r="1.7" fill="#ee8a52" opacity="0.56"/><circle cx="70.0" cy="7.7" r="1.8" fill="#ee8a52" opacity="0.46"/><circle cx="206.6" cy="27.3" r="1.1" fill="#ee8a52" opacity="0.69"/><circle cx="13.0" cy="22.0" r="1.7" fill="#ee8a52" opacity="0.44"/><circle cx="33.9" cy="25.2" r="2.4" fill="#ee8a52" opacity="0.42"/><circle cx="35.9" cy="19.7" r="1.2" fill="#ee8a52" opacity="0.49"/><circle cx="220.6" cy="12.0" r="1.2" fill="#ee8a52" opacity="0.33"/><circle cx="206.6" cy="33.0" r="2.0" fill="#ee8a52" opacity="0.41"/><circle cx="39.4" cy="27.5" r="2.3" fill="#ee8a52" opacity="0.65"/><circle cx="260.0" cy="26.1" r="1.8" fill="#ee8a52" opacity="0.66"/><circle cx="52.3" cy="16.1" r="2.2" fill="#ee8a52" opacity="0.56"/><circle cx="256.8" cy="10.6" r="2.2" fill="#ee8a52" opacity="0.45"/><circle cx="10.4" cy="6.4" r="1.7" fill="#ee8a52" opacity="0.43"/><circle cx="2.7" cy="2.9" r="1.1" fill="#ee8a52" opacity="0.35"/><circle cx="28.6" cy="9.4" r="1.6" fill="#ee8a52" opacity="0.44"/><circle cx="26.4" cy="25.3" r="1.1" fill="#ee8a52" opacity="0.51"/><circle cx="255.3" cy="26.5" r="1.7" fill="#ee8a52" opacity="0.47"/><circle cx="26.7" cy="16.8" r="1.7" fill="#ee8a52" opacity="0.48"/><circle cx="273.0" cy="33.0" r="1.9" fill="#ee8a52" opacity="0.34"/><circle cx="65.1" cy="8.6" r="1.0" fill="#ee8a52" opacity="0.66"/><circle cx="255.0" cy="14.6" r="1.3" fill="#ee8a52" opacity="0.41"/><circle cx="243.9" cy="26.5" r="2.2" fill="#ee8a52" opacity="0.45"/><circle cx="64.7" cy="21.8" r="1.6" fill="#ee8a52" opacity="0.36"/><circle cx="66.5" cy="5.0" r="1.6" fill="#ee8a52" opacity="0.60"/><circle cx="271.8" cy="17.3" r="1.7" fill="#ee8a52" opacity="0.51"/><circle cx="7.3" cy="5.3" r="1.9" fill="#ee8a52" opacity="0.55"/><circle cx="65.1" cy="21.5" r="1.8" fill="#ee8a52" opacity="0.50"/><circle cx="253.9" cy="33.4" r="2.2" fill="#ee8a52" opacity="0.67"/><path d="M10 30 C20 20,30 26,40 14 M220 6 C240 16,250 10,270 26" stroke="#ee8a52" stroke-width="1" fill="none" opacity="0.6"/></svg></div>
<div class="bn" style="top:398px;height:36px"><svg width="278" height="36" viewBox="0 0 278 36"><defs></defs><rect width="278" height="36" fill="#1aa8ec"/><path d="M0 6 C60 40,120 -10,200 30 M100 0 C130 20,150 30,140 36 M180 36 C200 10,240 0,278 20" stroke="#5cc4f4" stroke-width="1" fill="none"/><path d="M40 8 l4 -4 l1 4 l4 -3 l-2 6 l-6 1 z" fill="#fff"/><path d="M30 26 l4 -4 l1 4 l4 -3 l-2 6 l-6 1 z" fill="#fff"/><path d="M58 32 l4 -4 l1 4 l4 -3 l-2 6 l-6 1 z" fill="#fff"/><path d="M168 30 l4 -4 l1 4 l4 -3 l-2 6 l-6 1 z" fill="#fff"/><path d="M268 4 l4 -4 l1 4 l4 -3 l-2 6 l-6 1 z" fill="#fff"/><path d="M110 8 l4 -4 l1 4 l4 -3 l-2 6 l-6 1 z" fill="#fff"/><circle cx="32.0" cy="24.6" r="0.7" fill="#fff"/><circle cx="243.2" cy="13.5" r="0.9" fill="#fff"/><circle cx="26.8" cy="17.3" r="0.9" fill="#fff"/><circle cx="240.1" cy="32.2" r="1.0" fill="#fff"/><circle cx="205.4" cy="29.1" r="0.7" fill="#fff"/><circle cx="18.9" cy="20.1" r="1.5" fill="#fff"/><circle cx="254.5" cy="23.4" r="1.0" fill="#fff"/><circle cx="68.8" cy="29.5" r="1.4" fill="#fff"/><circle cx="38.1" cy="8.5" r="0.9" fill="#fff"/><circle cx="202.3" cy="30.5" r="1.5" fill="#fff"/><circle cx="243.1" cy="22.3" r="1.6" fill="#fff"/><circle cx="223.4" cy="3.0" r="0.8" fill="#fff"/><circle cx="44.4" cy="17.7" r="1.1" fill="#fff"/><circle cx="32.2" cy="3.2" r="1.1" fill="#fff"/><circle cx="234.6" cy="32.7" r="1.5" fill="#fff"/><circle cx="9.5" cy="2.8" r="1.2" fill="#fff"/><circle cx="35.4" cy="31.8" r="0.9" fill="#fff"/><circle cx="60.9" cy="4.6" r="1.4" fill="#fff"/></svg></div>
<div class="bn" style="top:444px;height:36px"><svg width="278" height="36" viewBox="0 0 278 36"><defs><linearGradient id="g9" x1="0" x2="1"><stop offset="0" stop-color="#0a040a"/><stop offset="0.2" stop-color="#1e0c34"/><stop offset="0.4" stop-color="#4a2484"/><stop offset="0.52" stop-color="#5e2e9c"/><stop offset="0.65" stop-color="#4a2484"/><stop offset="0.85" stop-color="#200c34"/><stop offset="1" stop-color="#060206"/></linearGradient></defs><rect width="278" height="36" fill="url(#g9)"/><g fill="none" stroke="#c8148a"><path d="M0 6 C20 0,40 20,60 10 C80 0,90 14,100 8" stroke-width="4"/><path d="M0 18 C20 8,40 30,70 18 C90 10,110 20,120 30" stroke-width="3.5"/><path d="M4 34 C20 20,50 6,80 4 C100 2,120 14,128 36" stroke-width="3"/><path d="M20 0 C30 16,60 30,90 36" stroke-width="2.5"/><path d="M0 28 C30 34,60 24,84 30" stroke-width="2.5"/><path d="M50 0 C70 10,80 4,110 0" stroke-width="2"/><path d="M190 26 C210 18,222 22,240 10 C250 4,262 2,278 0" stroke-width="2.5"/><path d="M210 0 C220 14,240 16,250 34" stroke-width="2"/><path d="M232 4 C244 24,262 14,278 22 M248 8 C258 4,266 10,262 16 M256 28 C262 22,272 26,278 30" stroke-width="1.8"/><path d="M180 24 L196 28" stroke-width="2.5"/></g></svg></div>
<div class="bn" style="top:489px;height:36px"><svg width="278" height="36" viewBox="0 0 278 36"><rect width="278" height="36" fill="#f89624"/><g fill="none" stroke="#ee7a1c" stroke-width="2.4"><path d="M60 2 C74 10,74 26,60 34 C46 26,46 10,60 2 Z"/><path d="M60 8 C66 14,66 22,60 28 C54 22,54 14,60 8 Z"/><path d="M74 18 C84 4,96 8,94 18 C92 26,84 24,86 18"/><path d="M46 18 C36 4,24 8,26 18 C28 26,36 24,34 18"/><path d="M80 34 C90 26,100 30,100 36 M40 34 C30 26,20 30,20 36 M80 2 C90 8,100 2,100 0 M40 2 C30 8,20 2,20 0"/><path d="M139 2 C153 10,153 26,139 34 C125 26,125 10,139 2 Z"/><path d="M139 8 C145 14,145 22,139 28 C133 22,133 14,139 8 Z"/><path d="M153 18 C163 4,175 8,173 18 C171 26,163 24,165 18"/><path d="M125 18 C115 4,103 8,105 18 C107 26,115 24,113 18"/><path d="M159 34 C169 26,179 30,179 36 M119 34 C109 26,99 30,99 36 M159 2 C169 8,179 2,179 0 M119 2 C109 8,99 2,99 0"/><path d="M218 2 C232 10,232 26,218 34 C204 26,204 10,218 2 Z"/><path d="M218 8 C224 14,224 22,218 28 C212 22,212 14,218 8 Z"/><path d="M232 18 C242 4,254 8,252 18 C250 26,242 24,244 18"/><path d="M204 18 C194 4,182 8,184 18 C186 26,194 24,192 18"/><path d="M238 34 C248 26,258 30,258 36 M198 34 C188 26,178 30,178 36 M238 2 C248 8,258 2,258 0 M198 2 C188 8,178 2,178 0"/></g><g fill="#f07a1c" opacity="0.8"><circle cx="20" cy="10" r="2"/><circle cx="258" cy="26" r="2"/><circle cx="100" cy="18" r="2.5"/><circle cx="178" cy="18" r="2.5"/></g></svg></div>
<div class="bn" style="top:534px;height:18px"><svg width="278" height="36" viewBox="0 0 278 36"><defs></defs><rect width="278" height="36" fill="#1ab2a2"/><path d="M5 18 C10 4,30 4,40 16 M60 0 C70 10,60 18,80 20 M190 10 C210 0,230 18,260 6" stroke="#c8f0ea" stroke-width="1" fill="none"/><circle cx="250" cy="4" r="1.6" fill="#fff"/><circle cx="262" cy="8" r="1.6" fill="#fff"/><circle cx="230" cy="6" r="1.6" fill="#fff"/><circle cx="50" cy="8" r="1.6" fill="#fff"/></svg></div>
<!-- separators -->
<div class="a" style="left:364px;top:56px;width:1px;height:512px;background:#ececec"></div>

<!-- right panel -->
<div class="t h" style="left:765px;top:70px;letter-spacing:-0.23px">Common Web Graphic Size</div>
<div class="dot" style="left:740px;top:92px;width:206px"></div>
<div class="lb" style="left:741px;top:105px;width:206px;height:64px;overflow:hidden">
<div class="sel" style="left:1px;top:2px;width:186px;height:14px"></div>
<div class="li" style="left:2px;top:4.00px;font-size:10.5px">468 X 60</div><div class="li" style="left:54px;top:4.00px;font-size:10.5px">Standard</div>
<div class="li" style="left:2px;top:18.70px;font-size:10.5px">392 X 72</div><div class="li" style="left:54px;top:18.70px;font-size:10.5px">Banner w/Nav Bar</div>
<div class="li" style="left:2px;top:33.40px;font-size:10.5px">728 X 90</div><div class="li" style="left:54px;top:33.40px;font-size:10.5px">Leaderboard</div>
<div class="li" style="left:2px;top:48.10px;font-size:10.5px">234 X 60</div><div class="li" style="left:54px;top:48.10px;font-size:10.5px">Half-Banner</div>
<div class="sb" style="left:187px;top:0;width:17px;height:62px"></div>
<div class="up" style="left:192px;top:8px"></div>
<div class="thumb" style="left:188px;top:18px;width:15px;height:15px"></div>
<div class="dn" style="left:192px;top:52px"></div>
</div>
<div class="t h" style="left:741px;top:185px;letter-spacing:-0.33px">Specified Custom Size</div>
<div class="dot" style="left:740px;top:207px;width:206px"></div>
<div class="t lt" style="left:741px;top:232px;font-size:11px">Width</div>
<div class="a" style="left:780px;top:223px;width:95px;height:29px;border:1px solid #c6c6c6;border-top-color:#b0b0b0;background:#fff;box-shadow:inset 1px 1px 1px #e6e6e6"></div>
<div class="t" style="left:783px;top:228px;font-size:10.5px;color:#222">468</div>
<div class="a" style="left:859px;top:225px;width:15px;height:13px;background:linear-gradient(#f6f6f6,#dedede);border:1px solid #c4c4c4"></div>
<div class="a" style="left:859px;top:238px;width:15px;height:13px;background:linear-gradient(#f6f6f6,#dedede);border:1px solid #c4c4c4"></div>
<div class="up" style="left:863.5px;top:230px;border-bottom-color:#5a6a8a"></div>
<div class="dn" style="left:863.5px;top:243px;border-top-color:#5a6a8a"></div>
<div class="t lt" style="left:882px;top:232px;font-size:10.2px">(1-8000 Pixels)</div>
<div class="t lt" style="left:740px;top:273px;font-size:11px">Height:</div>
<div class="a" style="left:780px;top:264px;width:95px;height:29px;border:1px solid #c6c6c6;border-top-color:#b0b0b0;background:#fff;box-shadow:inset 1px 1px 1px #e6e6e6"></div>
<div class="t" style="left:783px;top:269px;font-size:10.5px;color:#222">60</div>
<div class="a" style="left:859px;top:266px;width:15px;height:13px;background:linear-gradient(#f6f6f6,#dedede);border:1px solid #c4c4c4"></div>
<div class="a" style="left:859px;top:279px;width:15px;height:13px;background:linear-gradient(#f6f6f6,#dedede);border:1px solid #c4c4c4"></div>
<div class="up" style="left:863.5px;top:271px;border-bottom-color:#5a6a8a"></div>
<div class="dn" style="left:863.5px;top:284px;border-top-color:#5a6a8a"></div>
<div class="t lt" style="left:882px;top:273px;font-size:10.2px">(1-8000 Pixels)</div>
<!-- checkbox -->
<div class="a" style="left:750px;top:325px;width:12px;height:12px;border:1px solid #8f8f8f;background:linear-gradient(135deg,#dcdcdc,#f6f6f6)"></div>
<div class="t lt" style="left:765px;top:326px;font-size:10.7px;color:#333">New Blank Banner</div>
<div class="dot" style="left:743px;top:348px;width:207px"></div>
<div class="a" style="left:776px;top:362px;width:11px;height:11px;border-radius:50%;border:1px solid #c8c8c8;background:radial-gradient(circle,#f0c8a0 2px,#e0e0e0 3px,#f4f4f4)"></div>
<div class="t" style="left:791px;top:362px;font-size:10.9px;color:#9a9a9a">Simple color</div>
<div class="a" style="left:809px;top:381px;width:126px;height:30px;border:1px solid #c2c2c2;border-radius:2px;background:#f6f6f6"></div>
<div class="a" style="left:813px;top:385px;width:105px;height:22px;border:1px solid #8a8a8a;background:#ececec"></div>
<div class="a" style="left:920px;top:394px;width:0;height:0;border-left:5px solid transparent;border-right:5px solid transparent;border-top:5px solid #111"></div>
<div class="a" style="left:775px;top:424px;width:12px;height:12px;border-radius:50%;border:1px solid #c8c8c8;background:radial-gradient(circle,#fafafa,#e6e6e6)"></div>
<div class="t" style="left:791px;top:425px;font-size:10.6px;color:#9a9a9a">Transparent</div>
<div class="dot" style="left:743px;top:452px;width:207px"></div>
<!-- buttons -->
<div class="a" style="left:786px;top:472px;width:124px;height:36px;border:1px solid #f0d890;border-radius:2px;background:linear-gradient(#fff0b8,#fde49a 30%,#fcd870 60%,#fde690 85%,#fff4c8)"></div>
<div class="t" style="left:840px;top:485px;font-size:11px;color:#222">OK</div>
<div class="a" style="left:786px;top:519px;width:124px;height:35px;border:1px solid #8f8f8f;border-radius:3px;background:linear-gradient(#ffffff,#f6f7f9 60%,#eceef2)"></div>
<div class="t" style="left:831px;top:531px;font-size:10.8px;color:#222">Cancel</div>
<div class="a" style="left:772px;top:55px;width:1px;height:513px;background:#dcdcdc"></div>
<!-- quick access icons -->
<svg class="a" style="left:8px;top:8px" width="270" height="22">
<g opacity="0.85">
<rect x="14" y="4" width="10" height="10" fill="#9aa8b8"/>
<path d="M49 6h4l1 1h5v7h-10z" fill="#b8b0a0"/><path d="M51 9h10l-2 5h-10z" fill="#d8d0c0"/>
<rect x="71" y="5" width="10" height="10" fill="#8090b0"/><rect x="73" y="5" width="6" height="4" fill="#e0e0e0"/>
<rect x="92" y="5" width="10" height="10" fill="#8090b0"/><rect x="94" y="5" width="6" height="4" fill="#e0e0e0"/><path d="M96 8l8 8" stroke="#c8c0a0" stroke-width="1.5"/>
<rect x="112" y="6" width="13" height="9" fill="#c8c8c8"/><rect x="114" y="8" width="9" height="5" fill="#5080b0"/>
<path d="M136 2v6M132 8h8v6h-8z" stroke="#c8c8c8" stroke-width="2" fill="none"/>
<path d="M156 13 a5 5 0 1 1 8 -6" stroke="#909090" stroke-width="2" fill="none"/>
<path d="M184 13 a5 5 0 1 0 -8 -6" stroke="#909090" stroke-width="2" fill="none"/>
<path d="M197 3v8M194 11h6v5h-6z" stroke="#a0a0a0" stroke-width="2" fill="none"/>
<path d="M213 7h12l-2 6h-8z M216 15h1M222 15h1" stroke="#b8b8b8" stroke-width="1.5" fill="none"/>
<circle cx="240" cy="10.5" r="6" fill="none" stroke="#e0e0e0" stroke-width="1.5"/>
<path d="M238 8.5a2 2 0 1 1 3 2v1.5" stroke="#e0e0e0" stroke-width="1.6" fill="none"/><rect x="240" y="13.5" width="1.6" height="1.6" fill="#e0e0e0"/>
<path d="M254 10h5M255 12h3l-1.5 1.5z" stroke="#a0a0a0" stroke-width="1" fill="#a0a0a0"/>
</g></svg>
<!-- watermark -->
<svg class="a" style="left:0px;top:0px" width="70" height="70" viewBox="0 0 70 70">
<defs><clipPath id="lc"><ellipse cx="33" cy="39" rx="28" ry="27.5"/></clipPath>
<clipPath id="lc2"><ellipse cx="34" cy="36" rx="26" ry="11.5" transform="rotate(-15 34 36)"/><path d="M0 0 H70 V28 L0 46 Z"/></clipPath></defs>
<g clip-path="url(#lc)">
<rect x="0" y="0" width="70" height="70" fill="#e08a2e"/>
<rect x="18" y="30" width="10" height="40" fill="#d4dbe6"/><rect x="37" y="30" width="9" height="40" fill="#d4dbe6"/>
<path d="M0 0 H70 V28 L0 46 Z" fill="#1b7bc4"/>
<ellipse cx="34" cy="36" rx="26" ry="11.5" transform="rotate(-15 34 36)" fill="#1b7bc4"/>
<g clip-path="url(#lc2)">
<rect x="29" y="8" width="7" height="32" fill="#166aa8"/>
<path d="M16 44 L16 35 L27 28 L27 44 Z" fill="#d4dbe6"/>
<path d="M36 21 L44 15 L47 15 L47 44 L36 44 Z" fill="#d4dbe6"/>
</g>
</g>
<ellipse cx="34" cy="36" rx="26" ry="11.5" transform="rotate(-15 34 36)" fill="none" stroke="#d4dbe6" stroke-width="5.5"/>
<path d="M23 20.5 l1 2.5 2.6 0 -2.1 1.6 0.8 2.6 -2.3 -1.6 -2.3 1.6 0.8 -2.6 -2.1 -1.6 2.6 0z" fill="#f4f4f4"/>
<text x="27" y="45" font-family="Liberation Sans" font-size="9" fill="#eef" opacity="0.8">File</text>
</svg>
<svg class="a" style="left:64px;top:15px" width="140" height="30" viewBox="0 0 140 30" opacity="0.95">
<g stroke="#1e86d6" stroke-width="4.6" fill="none" stroke-linecap="square">
<!-- he -->
<path d="M3 4l3 3 M2 11l3 3 M2 26l5 -9 M10 5h16 M12 11h7v8h-7z M23 5v21h-3"/>
<!-- dong -->
<path d="M31 6h22 M40 2l-6 12h18 M42 8v20h-3 M36 20l-4 5 M47 19l5 6"/>
<!-- ruan -->
<path d="M58 6h10 M63 2v26 M59 11l-2 9h11 M57 24h11 M73 3l-2 7h10 M79 10l-3 4 M76 14l-5 14 M76 16l6 12"/>
<!-- jian -->
<path d="M90 2l-5 10 M88 8v20 M97 3l-3 7h14 M92 17h18 M101 3v25"/>
<!-- wang -->
<path d="M114 28v-24h22v24h-4 M118 9l6 12 M124 9l-6 12 M127 9l6 12 M133 9l-6 12"/>
</g></svg>
<div class="t" style="left:64px;top:47px;font-family:'Liberation Serif',serif;font-weight:bold;font-size:20px;color:#3aa23c;opacity:0.95;-webkit-text-stroke:0.8px #3aa23c">www.pc0359.cn</div>
</body></html>
